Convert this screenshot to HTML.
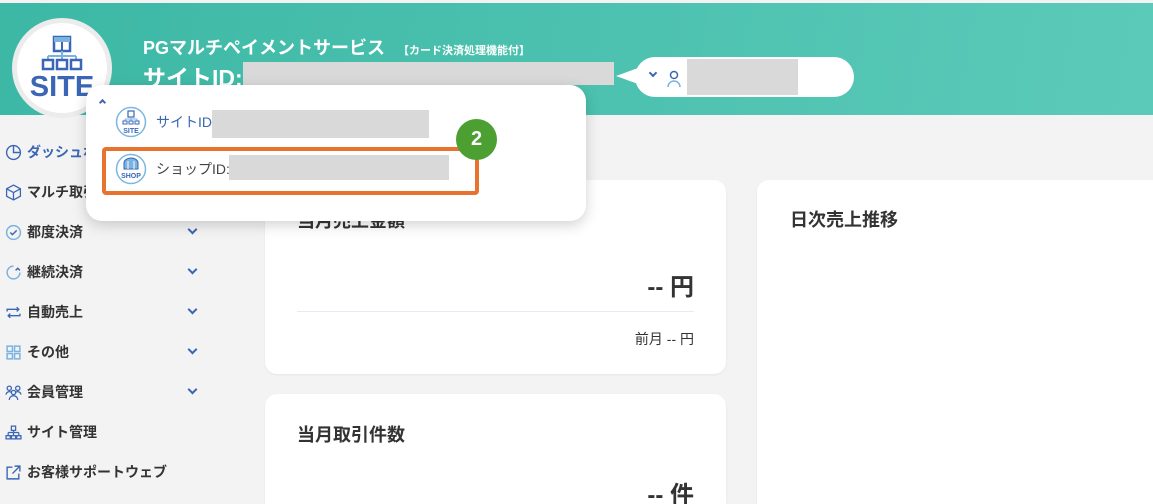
<!DOCTYPE html>
<html><head><meta charset="utf-8">
<style>
*{margin:0;padding:0;box-sizing:border-box}
html,body{width:1153px;height:504px;overflow:hidden}
body{background:#f3f3f3;font-family:"Liberation Sans","Noto Sans CJK JP",sans-serif;position:relative;color:#333}
.hdr{position:absolute;left:0;top:3px;width:1153px;height:112px;background:linear-gradient(100deg,#3cb8a5,#5ccab9)}
.abs{position:absolute}
.logo{left:12px;top:18px;width:100px;height:100px;border-radius:50%;background:#fff;border:5px solid #ececec}
.gray{background:#d9d9d9}
.card{background:#fff;border-radius:12px;box-shadow:0 1px 2px rgba(0,0,0,.06)}
.nav{position:absolute;left:5px;font-size:14px;font-weight:bold;color:#333;display:flex;align-items:center;gap:5px}
.chev{position:absolute;left:189px;width:7px;height:7px;border-right:2px solid #3a66b5;border-bottom:2px solid #3a66b5;transform:rotate(45deg)}
.ic{width:17px;height:17px}
</style></head><body>
<div class="hdr"></div>
<div class="abs logo"></div>
<svg class="abs" style="left:17px;top:23px" width="90" height="90" viewBox="0 0 90 90">
<rect x="37" y="14" width="16" height="14" fill="none" stroke="#3a66b5" stroke-width="2.5"/>
<rect x="37" y="14" width="16" height="5" fill="#7ab2e0"/>
<line x1="45" y1="19" x2="45" y2="28" stroke="#3a66b5" stroke-width="2"/>
<path d="M45 28v5M31 33h28M31 33v4M45 33v4M59 33v4" stroke="#7ab2e0" stroke-width="2" fill="none"/>
<rect x="26" y="37" width="10" height="9" fill="none" stroke="#3a66b5" stroke-width="2.5"/>
<rect x="40" y="37" width="10" height="9" fill="none" stroke="#3a66b5" stroke-width="2.5"/>
<rect x="54" y="37" width="10" height="9" fill="none" stroke="#3a66b5" stroke-width="2.5"/>
<text x="45" y="73" text-anchor="middle" font-family="Liberation Sans" font-weight="bold" font-size="29" fill="#3a66b5">SITE</text>
</svg>
<div class="abs" style="left:143px;top:34px;color:#fff;font-weight:bold;font-size:18px;white-space:nowrap">PGマルチペイメントサービス <span style="font-size:11px;margin-left:8px">【カード決済処理機能付】</span></div>
<div class="abs" style="left:143px;top:59px;color:#fff;font-weight:bold;font-size:23px">サイトID:</div>
<div class="abs gray" style="left:243px;top:62px;width:371px;height:23px"></div>
<svg class="abs" style="left:616px;top:66px" width="22" height="20"><path d="M0 10L22 2V18Z" fill="#fff"/></svg>
<div class="abs" style="left:635px;top:57px;width:219px;height:40px;background:#fff;border-radius:20px"></div>
<div class="abs" style="left:650px;top:70px;width:6px;height:6px;border-right:2px solid #3a66b5;border-bottom:2px solid #3a66b5;transform:rotate(45deg)"></div>
<svg class="abs" style="left:667px;top:70px" width="14" height="18"><circle cx="7" cy="5" r="3.5" fill="none" stroke="#3a66b5" stroke-width="1.5"/><path d="M1 17a6 6 0 0 1 12 0" fill="none" stroke="#7ab2e0" stroke-width="1.5"/></svg>
<div class="abs gray" style="left:687px;top:59px;width:111px;height:36px"></div>

<div class="nav" style="top:142px;color:#3a66b5"><svg class="ic" viewBox="0 0 16 16"><circle cx="8" cy="8" r="6.5" fill="none" stroke="#3a66b5" stroke-width="1.3"/><path d="M8 1.5V8H14" fill="none" stroke="#3a66b5" stroke-width="1.3"/></svg>ダッシュボード</div>
<div class="nav" style="top:182px"><svg class="ic" viewBox="0 0 16 16"><path d="M8 1L14.5 4.5V11.5L8 15L1.5 11.5V4.5ZM1.5 4.5L8 8L14.5 4.5M8 8V15" fill="none" stroke="#3a66b5" stroke-width="1.2"/></svg>マルチ取引</div>
<div class="nav" style="top:222px"><svg class="ic" viewBox="0 0 16 16"><circle cx="8" cy="8" r="6.5" fill="none" stroke="#7ab2e0" stroke-width="1.4"/><path d="M5 8l2 2 4-4" fill="none" stroke="#3a66b5" stroke-width="1.4"/></svg>都度決済</div>
<div class="chev" style="top:226px"></div>
<div class="nav" style="top:262px"><svg class="ic" viewBox="0 0 16 16"><path d="M14 8A6 6 0 1 1 8 2" fill="none" stroke="#7ab2e0" stroke-width="1.4"/><path d="M10 6l2-2 2 2" fill="none" stroke="#3a66b5" stroke-width="1.4"/></svg>継続決済</div>
<div class="chev" style="top:266px"></div>
<div class="nav" style="top:302px"><svg class="ic" viewBox="0 0 16 16"><path d="M2 7V5h11M11 3l2 2-2 2M14 9v2H3M5 13l-2-2 2-2" fill="none" stroke="#3a66b5" stroke-width="1.3"/></svg>自動売上</div>
<div class="chev" style="top:306px"></div>
<div class="nav" style="top:342px"><svg class="ic" viewBox="0 0 16 16"><g fill="none" stroke="#7ab2e0" stroke-width="1.4"><rect x="2" y="2" width="5" height="5"/><rect x="9" y="2" width="5" height="5"/><rect x="2" y="9" width="5" height="5"/><rect x="9" y="9" width="5" height="5"/></g></svg>その他</div>
<div class="chev" style="top:346px"></div>
<div class="nav" style="top:382px"><svg class="ic" viewBox="0 0 16 16"><g fill="none" stroke="#3a66b5" stroke-width="1.2"><circle cx="4" cy="4" r="2"/><circle cx="12" cy="4" r="2"/><circle cx="8" cy="8" r="2"/><path d="M1 10a3 3 0 0 1 5-2M15 10a3 3 0 0 0-5-2M4 15a4 4 0 0 1 8 0"/></g></svg>会員管理</div>
<div class="chev" style="top:386px"></div>
<div class="nav" style="top:422px"><svg class="ic" viewBox="0 0 16 16"><g fill="none" stroke="#3a66b5" stroke-width="1.2"><rect x="6" y="2" width="4" height="4"/><path d="M8 6v2M3 8h10M3 8v3M8 8v3M13 8v3"/><rect x="1" y="11" width="4" height="3"/><rect x="6" y="11" width="4" height="3"/><rect x="11" y="11" width="4" height="3"/></g></svg>サイト管理</div>
<div class="nav" style="top:462px"><svg class="ic" viewBox="0 0 16 16"><g fill="none" stroke="#3a66b5" stroke-width="1.3"><path d="M7 3H2v11h11V9"/><path d="M9 2h5v5M14 2L7 9"/></g></svg>お客様サポートウェブ</div>

<div class="abs card" style="left:265px;top:180px;width:461px;height:194px"></div>
<div class="abs" style="left:297px;top:207px;font-size:18px;font-weight:bold">当月売上金額</div>
<div class="abs" style="left:500px;top:267px;width:194px;text-align:right;font-size:24px;font-weight:bold">-- 円</div>
<div class="abs" style="left:297px;top:311px;width:397px;height:1px;background:#e3ebf5"></div>
<div class="abs" style="left:500px;top:329px;width:194px;text-align:right;font-size:14px">前月 -- 円</div>
<div class="abs card" style="left:265px;top:394px;width:461px;height:110px;border-radius:12px 12px 0 0"></div>
<div class="abs" style="left:297px;top:421px;font-size:18px;font-weight:bold">当月取引件数</div>
<div class="abs" style="left:500px;top:480px;width:194px;height:24px;overflow:hidden;text-align:right;font-size:24px;font-weight:bold;line-height:32px">-- 件</div>
<div class="abs card" style="left:757px;top:180px;width:396px;height:324px;border-radius:12px 0 0 0"></div>
<div class="abs" style="left:790px;top:206px;font-size:18px;font-weight:bold">日次売上推移</div>

<div class="abs" style="left:86px;top:85px;width:500px;height:136px;background:#fff;border-radius:16px;box-shadow:0 4px 14px rgba(0,0,0,.18)"></div>
<div class="abs" style="left:100px;top:100px;width:5px;height:5px;border-left:2px solid #3a66b5;border-top:2px solid #3a66b5;transform:rotate(45deg)"></div>
<svg class="abs" style="left:115px;top:106px" width="32" height="32"><circle cx="16" cy="16" r="14.5" fill="#fff" stroke="#7ab8df" stroke-width="1.5"/><rect x="13" y="5" width="6" height="6" fill="none" stroke="#3a66b5" stroke-width="1.2"/><path d="M16 11v2M10 13h12M10 13v2M16 13v2M22 13v2" stroke="#7ab2e0" fill="none"/><g fill="none" stroke="#3a66b5"><rect x="8" y="15" width="4" height="3"/><rect x="14" y="15" width="4" height="3"/><rect x="20" y="15" width="4" height="3"/></g><text x="16" y="27" text-anchor="middle" font-size="7" font-weight="bold" fill="#3a66b5" font-family="Liberation Sans">SITE</text></svg>
<div class="abs" style="left:156px;top:112px;font-size:14px;color:#3a66b5">サイトID</div>
<div class="abs gray" style="left:212px;top:110px;width:217px;height:28px"></div>
<div class="abs" style="left:102px;top:147px;width:377px;height:48px;border:4px solid #e8732f;border-radius:4px"></div>
<svg class="abs" style="left:115px;top:153px" width="32" height="32"><circle cx="16" cy="16" r="14.5" fill="#fff" stroke="#7ab8df" stroke-width="1.5"/><path d="M9 10a7 5 0 0 1 14 0v6H9Z" fill="#7ab2e0" stroke="#3a66b5"/><path d="M13 8v8M19 8v8" stroke="#fff"/><text x="16" y="25" text-anchor="middle" font-size="7" font-weight="bold" fill="#3a66b5" font-family="Liberation Sans">SHOP</text></svg>
<div class="abs" style="left:156px;top:159px;font-size:14px;color:#444">ショップID:</div>
<div class="abs gray" style="left:229px;top:155px;width:220px;height:25px"></div>
<div class="abs" style="left:456px;top:119px;width:41px;height:41px;border-radius:50%;background:#4c9f31;color:#fff;font-weight:bold;font-size:20px;text-align:center;line-height:41px">2</div>
</body></html>
